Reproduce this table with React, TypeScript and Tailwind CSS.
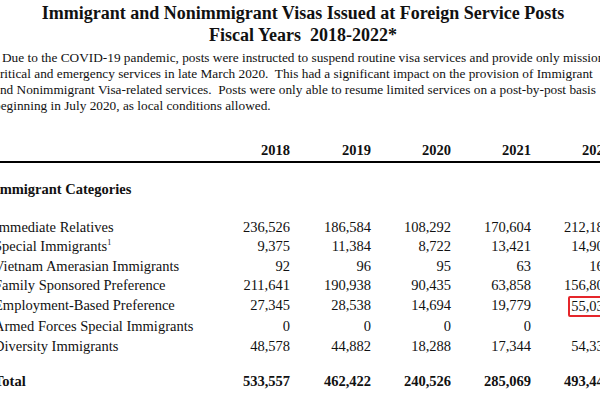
const rows = [
  { label: "Immediate Relatives", vals: ["236,526", "186,584", "108,292", "170,604", "212,187"] },
  { label: "Special Immigrants", sup: "1", vals: ["9,375", "11,384", "8,722", "13,421", "14,906"] },
  { label: "Vietnam Amerasian Immigrants", vals: ["92", "96", "95", "63", "168"] },
  { label: "Family Sponsored Preference", vals: ["211,641", "190,938", "90,435", "63,858", "156,802"] },
  { label: "Employment-Based Preference", vals: ["27,345", "28,538", "14,694", "19,779", "55,039"], mark: true },
  { label: "Armed Forces Special Immigrants", vals: ["0", "0", "0", "0", "0"] },
  { label: "Diversity Immigrants", vals: ["48,578", "44,882", "18,288", "17,344", "54,338"] },
];

const years = ["2018", "2019", "2020", "2021", "2022"];
const totals = ["533,557", "462,422", "240,526", "285,069", "493,440"];

const grid = "grid grid-cols-[216px_80px_81px_80px_80px_80px]";

export default function App() {
  return (
    <div className="w-[600px] h-[400px] overflow-hidden bg-white text-[#111] font-['Liberation_Serif','Times_New_Roman',serif]">
      <div className="ml-[-6px] w-[640px]">
        {/* title */}
        <div className="w-[618px] pt-[2px] text-center text-[18px] leading-[22px] font-bold">
          <div>Immigrant and Nonimmigrant Visas Issued at Foreign Service Posts</div>
          <div className="whitespace-pre">Fiscal Years  2018-2022*</div>
        </div>

        {/* note */}
        <div className="mt-[4px] text-[13.3px] leading-[16px] whitespace-pre">
          <div className="pl-[8px]">
            Due to the COVID-19 pandemic, posts were instructed to suspend routine visa services and provide only mission
          </div>
          <div>critical and emergency services in late March 2020.  This had a significant impact on the provision of Immigrant</div>
          <div>and Nonimmigrant Visa-related services.  Posts were only able to resume limited services on a post-by-post basis</div>
          <div>beginning in July 2020, as local conditions allowed.</div>
        </div>

        {/* table */}
        <div className="mt-[27px] text-[14.5px] leading-[19.5px]">
          <div className={`${grid} font-bold`}>
            <div />
            {years.map((y) => (
              <div key={y} className="text-right">{y}</div>
            ))}
          </div>
          <div className="h-[2.5px] bg-black" />

          <div className="mt-[17px] font-bold">Immigrant Categories</div>

          <div className="mt-[18px]">
            {rows.map((r) => (
              <div key={r.label} className={grid}>
                <div className="whitespace-nowrap">
                  {r.label}
                  {r.sup && <sup className="text-[8px] -top-[6px]">{r.sup}</sup>}
                </div>
                {r.vals.map((v, i) => (
                  <div key={i} className="text-right">
                    {r.mark && i === 4 ? (
                      <span className="inline-block mr-[-4px] pl-[1px] pr-[2px] border-2 border-[#e5262b] rounded-[2px] leading-[17.5px]">
                        {v}
                      </span>
                    ) : (
                      v
                    )}
                  </div>
                ))}
              </div>
            ))}
          </div>

          <div className={`${grid} mt-[16px] font-bold`}>
            <div>Total</div>
            {totals.map((t) => (
              <div key={t} className="text-right">{t}</div>
            ))}
          </div>
        </div>
      </div>
    </div>
  );
}
